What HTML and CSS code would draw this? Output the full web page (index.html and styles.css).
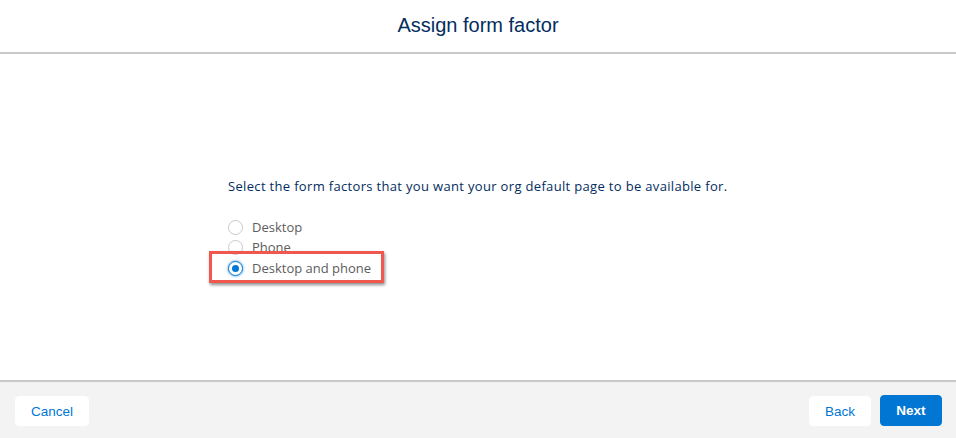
FILE: index.html
```html
<!DOCTYPE html>
<html lang="en">
<head>
<meta charset="utf-8">
<title>Assign form factor</title>
<link rel="stylesheet" href="styles.css">
</head>
<body>
<div class="modal">
  <header class="modal-header">
    <h1 class="modal-title">Assign form factor</h1>
  </header>
  <main class="modal-body">
    <div class="form">
      <p class="prompt">Select the form factors that you want your org default page to be available for.</p>
      <div class="options">
        <label class="option"><span class="radio"></span><span class="option-label">Desktop</span></label>
        <label class="option"><span class="radio"></span><span class="option-label">Phone</span></label>
        <label class="option option-selected"><span class="radio radio-checked"></span><span class="option-label">Desktop and phone</span><span class="highlight"></span></label>
      </div>
    </div>
  </main>
  <footer class="modal-footer">
    <button class="btn btn-neutral btn-cancel">Cancel</button>
    <div class="footer-right">
      <button class="btn btn-neutral">Back</button>
      <button class="btn btn-brand">Next</button>
    </div>
  </footer>
</div>
</body>
</html>
```
FILE: styles.css
```css
* { box-sizing: border-box; }
html, body { margin: 0; padding: 0; }
body {
  width: 956px;
  height: 438px;
  background: #ffffff;
  font-family: "Open Sans", "Liberation Sans", Arial, sans-serif;
  overflow: hidden;
}
.modal {
  display: flex;
  flex-direction: column;
  height: 438px;
}
.modal-header {
  height: 54px;
  border-bottom: 2px solid #c9c9c9;
  display: flex;
  align-items: center;
  justify-content: center;
}
.modal-title {
  margin: 0;
  font-family: "Liberation Sans", Arial, sans-serif;
  font-size: 20px;
  font-weight: normal;
  color: #032d60;
  padding-bottom: 2px;
}
.modal-body {
  flex: 1;
  display: flex;
  justify-content: center;
  padding-top: 123px;
}
.form {
  width: 500px;
}
.prompt {
  margin: 0;
  font-size: 13px;
  line-height: 18px;
  letter-spacing: 0.33px;
  color: #032d60;
  white-space: nowrap;
}
.options {
  margin-top: 22px;
  display: flex;
  flex-direction: column;
}
.option {
  position: relative;
  display: flex;
  align-items: center;
  height: 20px;
}
.option-selected { margin-top: 1px; }
.radio {
  width: 15px;
  height: 15px;
  border: 1px solid #c9c9c9;
  border-radius: 50%;
  background: #fff;
  margin-right: 9px;
  display: flex;
  align-items: center;
  justify-content: center;
}
.radio-checked {
  border-color: #0176d3;
  box-shadow: 0 0 2px 1px rgba(1, 118, 211, 0.35);
}
.radio-checked::after {
  content: "";
  width: 7px;
  height: 7px;
  border-radius: 50%;
  background: #0176d3;
}
.option-label {
  font-size: 13px;
  color: #5c5c5c;
}
.highlight {
  position: absolute;
  left: -19px;
  top: -7px;
  width: 175px;
  height: 32px;
  border: 3px solid #f0574f;
  box-shadow: 1px 2px 3px rgba(0, 0, 0, 0.45);
}
.modal-footer {
  height: 58px;
  border-top: 2px solid #c9c9c9;
  background: #f3f3f3;
  display: flex;
  justify-content: space-between;
  align-items: flex-start;
  padding: 14px 14px 0 15px;
}
.footer-right {
  display: flex;
  gap: 9px;
}
.btn {
  height: 30px;
  border-radius: 4px;
  border: 1px solid transparent;
  font-family: "Liberation Sans", Arial, sans-serif;
  font-size: 13.5px;
  padding: 0;
  cursor: pointer;
}
.btn-neutral {
  background: #ffffff;
  color: #0176d3;
  border-color: #ffffff;
}
.btn-cancel { width: 74px; }
.footer-right .btn { width: 62px; }
.btn-brand {
  background: #0176d3;
  border-color: #0176d3;
  color: #ffffff;
  font-weight: bold;
  height: 31px;
  margin-top: -1px;
}
```
